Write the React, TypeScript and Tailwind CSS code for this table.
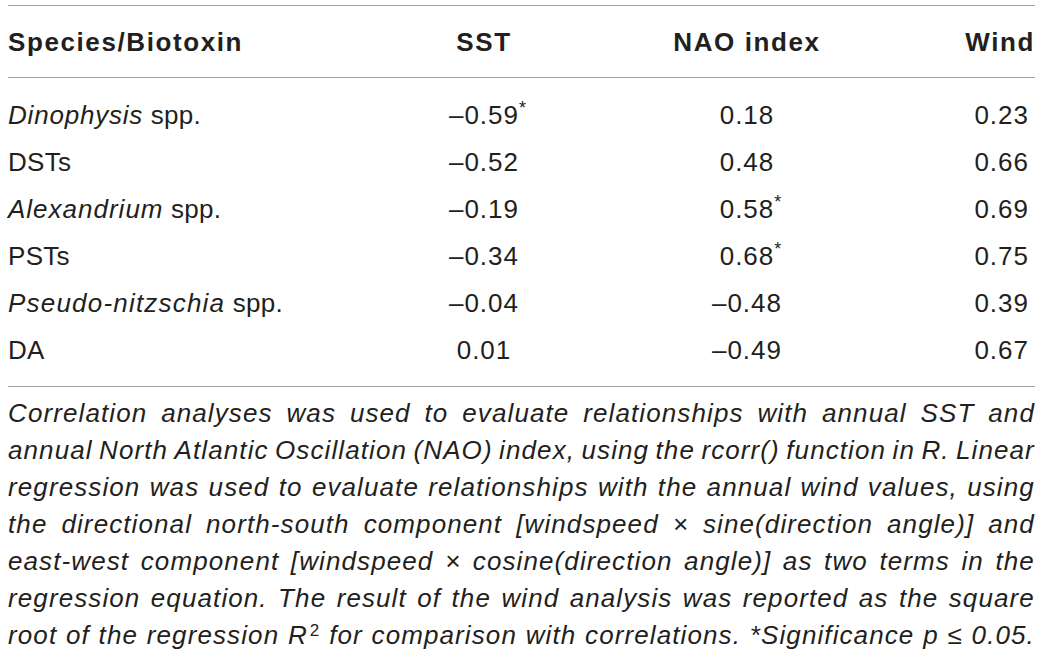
import React from "react";

const rows: { name: React.ReactNode; sst: string; nao: string; wind: string }[] = [
  { name: <><i className="tracking-[0.8px]">Dinophysis</i> spp.</>, sst: "–0.59*", nao: "0.18", wind: "0.23" },
  { name: "DSTs", sst: "–0.52", nao: "0.48", wind: "0.66" },
  { name: <><i className="tracking-[1px]">Alexandrium</i> spp.</>, sst: "–0.19", nao: "0.58*", wind: "0.69" },
  { name: "PSTs", sst: "–0.34", nao: "0.68*", wind: "0.75" },
  { name: <><i className="tracking-[1.2px]">Pseudo-nitzschia</i> spp.</>, sst: "–0.04", nao: "–0.48", wind: "0.39" },
  { name: "DA", sst: "0.01", nao: "–0.49", wind: "0.67" },
];

function Val({ v }: { v: string }) {
  const star = v.endsWith("*");
  const num = star ? v.slice(0, -1) : v;
  return (
    <span className="relative tracking-[1px]">
      {num}
      {star && <span className="absolute left-full top-[-5px] text-[18px]">*</span>}
    </span>
  );
}

const captionLines: React.ReactNode[][] = [
  "Correlation analyses was used to evaluate relationships with annual SST and".split(" "),
  "annual North Atlantic Oscillation (NAO) index, using the rcorr() function in R. Linear".split(" "),
  "regression was used to evaluate relationships with the annual wind values, using".split(" "),
  "the directional north-south component [windspeed × sine(direction angle)] and".split(" "),
  "east-west component [windspeed × cosine(direction angle)] as two terms in the".split(" "),
  "regression equation. The result of the wind analysis was reported as the square".split(" "),
  [
    "root", "of", "the", "regression",
    <span key="r2">R<sup className="not-italic text-[17px] ml-[2px]">2</sup></span>,
    "for", "comparison", "with", "correlations.", "*Significance", "p", "≤", "0.05.",
  ],
];

export default function App() {
  return (
    <div
      className="w-[1043px] h-[657px] bg-white text-[#231f20] px-[8px] pt-[5px]"
      style={{ fontFamily: '"Liberation Sans", Arial, sans-serif' }}
    >
      <div className="w-[1027px]">
        <div className="border-t border-[#a0a0a0]" />
        <div className="grid grid-cols-[400px_152px_374px_101px] h-[71px] items-center text-[26px] font-bold tracking-[1.6px]">
          <div className="pt-[2px]">Species/Biotoxin</div>
          <div className="text-center pt-[2px]">SST</div>
          <div className="text-center pt-[2px]">NAO index</div>
          <div className="text-right pt-[2px]">Wind</div>
        </div>
        <div className="border-t border-[#a0a0a0]" />
        <div className="pt-[14px] pb-[12px] text-[26px] tracking-[0.3px]">
          {rows.map((r, i) => (
            <div key={i} className="grid grid-cols-[400px_152px_374px_101px] h-[47px] items-center">
              <div>{r.name}</div>
              <div className="text-center"><Val v={r.sst} /></div>
              <div className="text-center"><Val v={r.nao} /></div>
              <div className="text-right pr-[6px]"><Val v={r.wind} /></div>
            </div>
          ))}
        </div>
        <div className="border-t border-[#a0a0a0]" />
        <div className="italic text-[26px] leading-[37px] pt-[8px] tracking-[1.1px]">
          {captionLines.map((words, i) => (
            <div key={i} className="flex justify-between whitespace-nowrap">
              {words.map((w, j) => (
                <span key={j}>{w}</span>
              ))}
            </div>
          ))}
        </div>
      </div>
    </div>
  );
}
